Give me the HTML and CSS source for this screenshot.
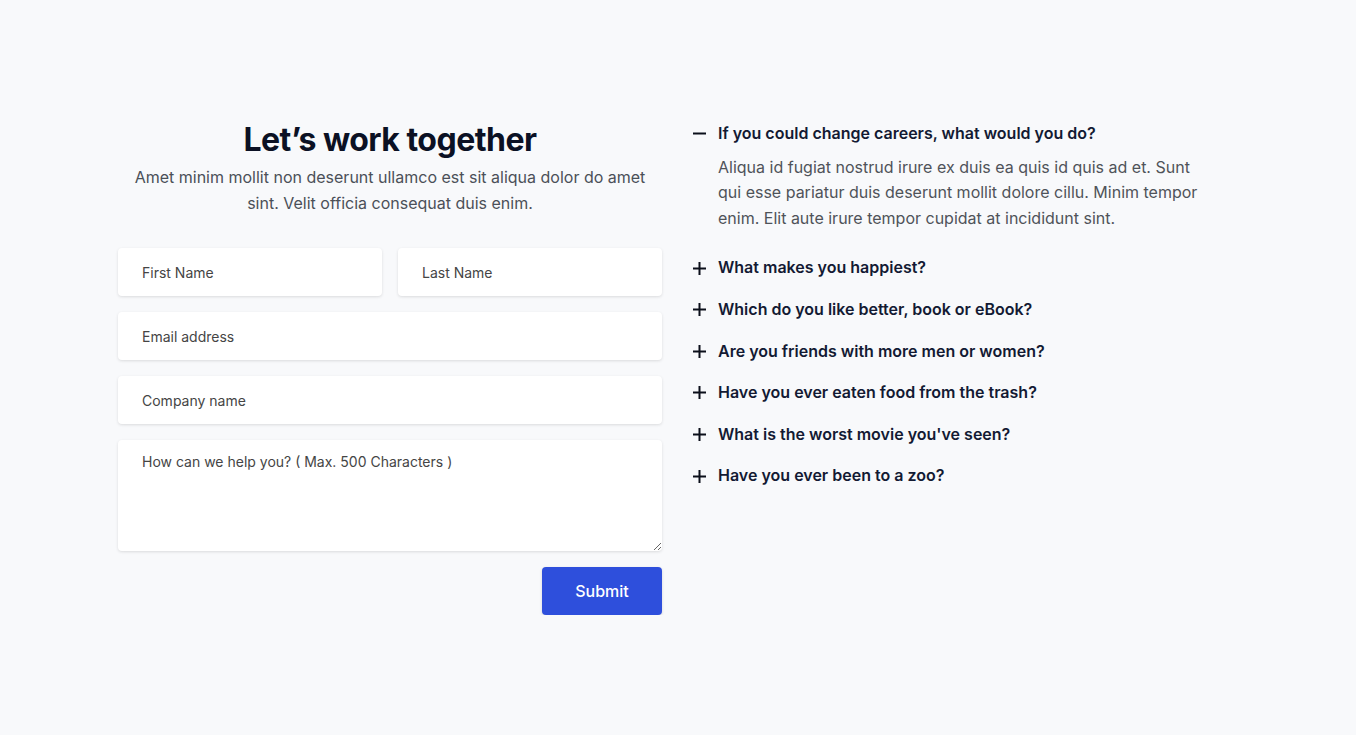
FILE: index.html
```html
<!DOCTYPE html>
<html lang="en">
<head>
    <meta charset="UTF-8">
    <meta name="viewport" content="width=device-width, initial-scale=1.0">
    <title>Contact</title>
    <link rel="stylesheet" href="styles.css">
</head>
<body>
    <div class="container">
        <!-- Contact form -->
        <section class="contact">
            <h1>Let’s work together</h1>
            <p class="lead">Amet minim mollit non deserunt ullamco est sit aliqua dolor do amet sint. Velit officia consequat duis enim.</p>
            <form class="form">
                <div class="row">
                    <input type="text" placeholder="First Name">
                    <input type="text" placeholder="Last Name">
                </div>
                <input type="email" placeholder="Email address">
                <input type="text" placeholder="Company name">
                <textarea placeholder="How can we help you? ( Max. 500 Characters )"></textarea>
                <div class="actions">
                    <button type="submit">Submit</button>
                </div>
            </form>
        </section>

        <!-- FAQ -->
        <section class="faq">
            <div class="item open">
                <div class="question">
                    <svg width="13" height="13" viewBox="0 0 13 13"><path d="M0 6.5h13" stroke="currentColor" stroke-width="2"/></svg>
                    <span>If you could change careers, what would you do?</span>
                </div>
                <p class="answer">Aliqua id fugiat nostrud irure ex duis ea quis id quis ad et. Sunt qui esse pariatur duis deserunt mollit dolore cillu. Minim tempor enim. Elit aute irure tempor cupidat at incididunt sint.</p>
            </div>
            <div class="item">
                <div class="question">
                    <svg width="13" height="13" viewBox="0 0 13 13"><path d="M0 6.5h13M6.5 0v13" stroke="currentColor" stroke-width="2"/></svg>
                    <span>What makes you happiest?</span>
                </div>
            </div>
            <div class="item">
                <div class="question">
                    <svg width="13" height="13" viewBox="0 0 13 13"><path d="M0 6.5h13M6.5 0v13" stroke="currentColor" stroke-width="2"/></svg>
                    <span>Which do you like better, book or eBook?</span>
                </div>
            </div>
            <div class="item">
                <div class="question">
                    <svg width="13" height="13" viewBox="0 0 13 13"><path d="M0 6.5h13M6.5 0v13" stroke="currentColor" stroke-width="2"/></svg>
                    <span>Are you friends with more men or women?</span>
                </div>
            </div>
            <div class="item">
                <div class="question">
                    <svg width="13" height="13" viewBox="0 0 13 13"><path d="M0 6.5h13M6.5 0v13" stroke="currentColor" stroke-width="2"/></svg>
                    <span>Have you ever eaten food from the trash?</span>
                </div>
            </div>
            <div class="item">
                <div class="question">
                    <svg width="13" height="13" viewBox="0 0 13 13"><path d="M0 6.5h13M6.5 0v13" stroke="currentColor" stroke-width="2"/></svg>
                    <span>What is the worst movie you've seen?</span>
                </div>
            </div>
            <div class="item">
                <div class="question">
                    <svg width="13" height="13" viewBox="0 0 13 13"><path d="M0 6.5h13M6.5 0v13" stroke="currentColor" stroke-width="2"/></svg>
                    <span>Have you ever been to a zoo?</span>
                </div>
            </div>
        </section>
    </div>
</body>
</html>
```
FILE: styles.css
```css
/* Basic reset */
* {
    box-sizing: border-box;
    margin: 0;
    padding: 0;
}

body {
    background-color: #f8f9fb;
    font-family: Inter, "Noto Sans", sans-serif;
    color: #111827;
}

/* Two column layout */
.container {
    width: 1120px;
    margin: 0 auto;
    padding-top: 120px;
    display: grid;
    grid-template-columns: 544px 544px;
    column-gap: 31px;
}

/* Contact form */
h1 {
    font-size: 32px;
    line-height: 40px;
    font-weight: 700;
    text-align: center;
    color: #0b1124;
    letter-spacing: -0.5px;
}

.lead {
    margin-top: 5px;
    font-size: 16px;
    line-height: 25.6px;
    text-align: center;
    color: #4b5058;
}

.form {
    margin-top: 32px;
    display: flex;
    flex-direction: column;
    gap: 16px;
}

.row {
    display: grid;
    grid-template-columns: 1fr 1fr;
    gap: 16px;
}

input,
textarea {
    width: 100%;
    height: 48px;
    padding: 0 24px;
    font-family: inherit;
    font-size: 14px;
    color: #333;
    background-color: #ffffff;
    border: none;
    border-radius: 4px;
    box-shadow: 0 1px 3px rgba(0, 0, 0, 0.12);
    outline: none;
}

textarea {
    height: 111px;
    padding: 12px 24px;
    line-height: 20px;
    resize: vertical;
}

input::placeholder,
textarea::placeholder {
    color: #454545;
    opacity: 1;
}

.actions {
    display: flex;
    justify-content: flex-end;
}

button {
    width: 120px;
    height: 48px;
    font-family: inherit;
    font-size: 16px;
    font-weight: 500;
    color: #ffffff;
    background-color: #2e4fdc;
    border: none;
    border-radius: 4px;
    box-shadow: 0 1px 3px rgba(0, 0, 0, 0.15);
    cursor: pointer;
}

/* FAQ */
.faq {
    width: 516px;
    padding-top: 1px;
    display: flex;
    flex-direction: column;
    gap: 16px;
}

.question {
    display: flex;
    align-items: center;
    gap: 12px;
    font-size: 16px;
    line-height: 25.6px;
    font-weight: 600;
    color: #131a33;
}

.question svg {
    flex: none;
    color: #0b0f1a;
}

.answer {
    margin-top: 8px;
    padding-left: 25px;
    padding-bottom: 8px;
    font-size: 16px;
    line-height: 25.6px;
    color: #4f5359;
}
```
